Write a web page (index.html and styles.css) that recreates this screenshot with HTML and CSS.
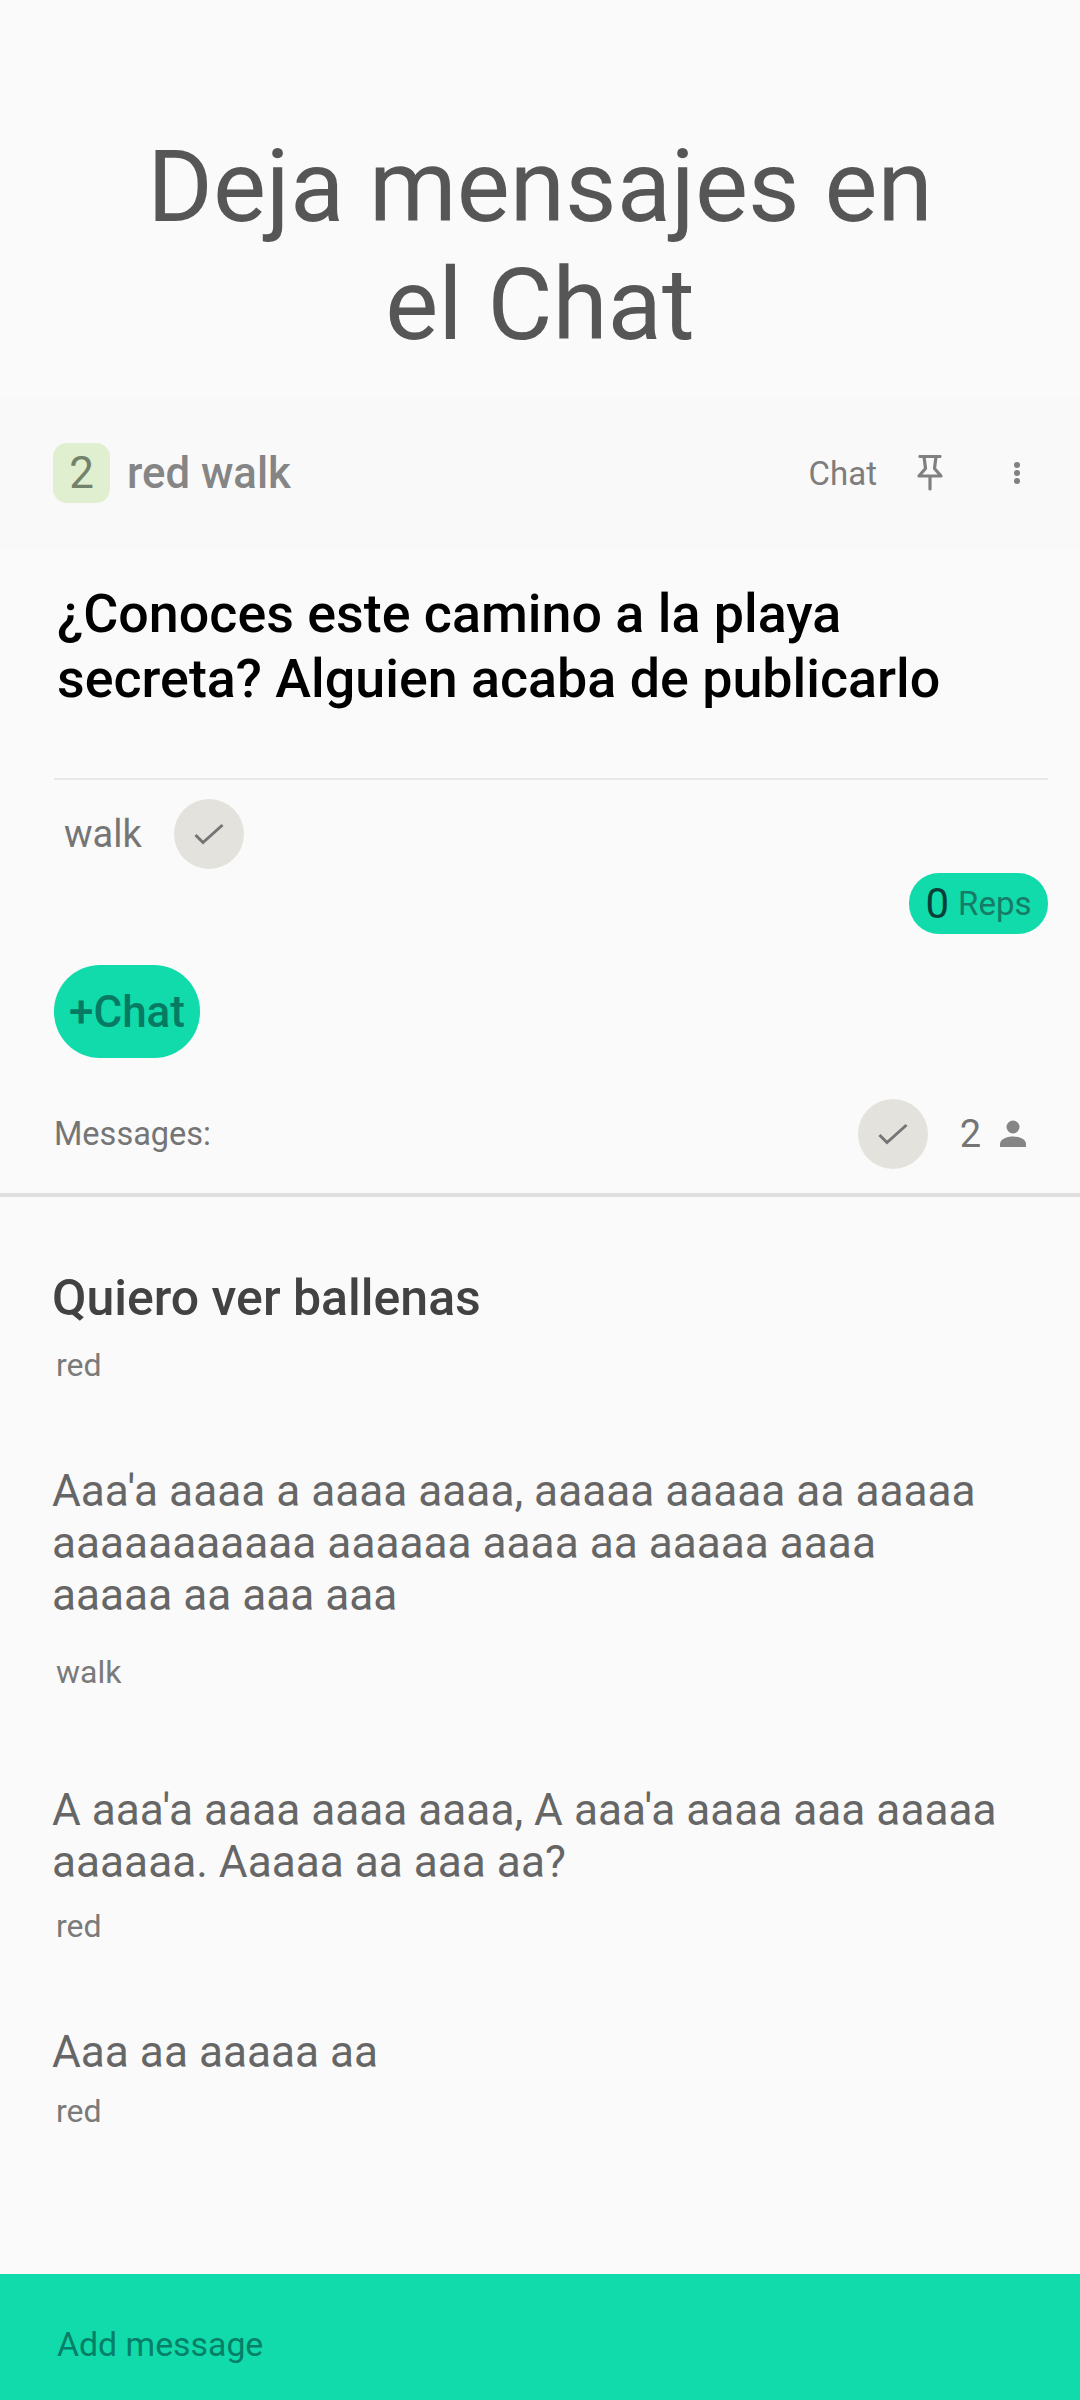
FILE: index.html
```html
<!DOCTYPE html>
<html lang="en">
<head>
    <meta charset="UTF-8">
    <meta name="viewport" content="width=device-width, initial-scale=1.0">
    <title>Deja mensajes en el Chat</title>
    <link rel="stylesheet" href="styles.css">
</head>
<body>
    <div id="main">
        <h1 class="title">Deja mensajes en<br>el Chat</h1>

        <div class="bar">
            <span class="badge">2</span>
            <span class="bar-name">red walk</span>
            <span class="bar-chat">Chat</span>
            <svg class="pin" viewBox="0 0 26 36" width="26" height="36">
                <path d="M3 1.500h20M7 1.500l1.500 12L2 21h22l-6.500-7.500 1.500-12M13 21v13" fill="none" stroke="#808080" stroke-width="3.200" stroke-linecap="round" stroke-linejoin="round"/>
            </svg>
            <span class="dots"><i></i><i></i><i></i></span>
        </div>

        <h2 class="question">¿Conoces este camino a la playa<br>secreta? Alguien acaba de publicarlo</h2>

        <div class="divider"></div>

        <div class="author-row">
            <span class="author">walk</span>
            <span class="check">
                <svg viewBox="0 0 30 22" width="30" height="22"><path d="M1.500 12l7.500 7.500L28.500 2" fill="none" stroke="#757575" stroke-width="3"/></svg>
            </span>
        </div>

        <div class="reps-row">
            <span class="reps"><b>0</b> Reps</span>
        </div>

        <button class="add-chat">+Chat</button>

        <div class="messages-head">
            <span class="messages-label">Messages:</span>
            <span class="check">
                <svg viewBox="0 0 30 22" width="30" height="22"><path d="M1.500 12l7.500 7.500L28.500 2" fill="none" stroke="#757575" stroke-width="3"/></svg>
            </span>
            <span class="people">2</span>
            <svg class="person" viewBox="0 0 28 28" width="28" height="28">
                <circle cx="14" cy="7" r="6.500" fill="#858585"/>
                <path d="M1 27v-3c0-5 7-7.500 13-7.500s13 2.500 13 7.500v3z" fill="#858585"/>
            </svg>
        </div>

        <div class="list">
            <div class="msg msg-first">
                <p class="msg-head">Quiero ver ballenas</p>
                <span class="msg-by">red</span>
            </div>
            <div class="msg msg-long">
                <p>Aaa'a aaaa a aaaa aaaa, aaaaa aaaaa aa aaaaa<br>aaaaaaaaaaa aaaaaa aaaa aa aaaaa aaaa<br>aaaaa aa aaa aaa</p>
                <span class="msg-by">walk</span>
            </div>
            <div class="msg msg-mid">
                <p>A aaa'a aaaa aaaa aaaa, A aaa'a aaaa aaa aaaaa<br>aaaaaa. Aaaaa aa aaa aa?</p>
                <span class="msg-by">red</span>
            </div>
            <div class="msg msg-short">
                <p>Aaa aa aaaaa aa</p>
                <span class="msg-by">red</span>
            </div>
        </div>

        <div class="footer">Add message</div>
    </div>
</body>
</html>
```

FILE: styles.css
```css
body {
    font-family: Roboto, sans-serif;
    background-color: #fafafa;
    margin: 0;
    padding: 0;
}

#main {
    display: flex;
    flex-direction: column;
    height: 2400px;
    overflow: hidden;
}

.title {
    margin: 0;
    padding-top: 128px;
    height: 397px;
    box-sizing: border-box;
    text-align: center;
    font-size: 100px;
    line-height: 118px;
    font-weight: 400;
    color: #565656;
}

.bar {
    display: flex;
    align-items: center;
    height: 152px;
    padding: 0 54px 0 53px;
    background-color: #f9f9f9;
}

.badge {
    width: 57px;
    height: 60px;
    border-radius: 14px;
    background-color: #e0efcf;
    color: #73836b;
    font-size: 44px;
    line-height: 60px;
    text-align: center;
}

.bar-name {
    margin-left: 17px;
    font-size: 43.700px;
    font-weight: 500;
    color: #858585;
    flex: 1;
}

.bar-chat {
    font-size: 33px;
    color: #7d7d7d;
}

.pin {
    margin-left: 40px;
}

.dots {
    display: flex;
    flex-direction: column;
    gap: 2px;
    margin-left: 71px;
    margin-right: 6px;
}

.dots i {
    display: block;
    width: 6px;
    height: 6px;
    border-radius: 50%;
    background-color: #808080;
}

.question {
    margin: 0;
    padding: 32px 57px 0;
    font-size: 53.800px;
    line-height: 65px;
    font-weight: 500;
    color: #000;
}

.divider {
    margin: 67px 32px 0 54px;
    height: 2px;
    background-color: #e8e8e8;
}

.author-row {
    display: flex;
    align-items: center;
    margin-top: 19px;
    padding-left: 64px;
}

.author {
    width: 110px;
    font-size: 38px;
    color: #757575;
}

.check {
    display: flex;
    align-items: center;
    justify-content: center;
    width: 70px;
    height: 70px;
    border-radius: 50%;
    background-color: #e4e2dd;
}

.reps-row {
    display: flex;
    justify-content: flex-end;
    margin-top: 4px;
    padding-right: 32px;
}

.reps {
    display: flex;
    align-items: center;
    justify-content: center;
    gap: 9px;
    width: 139px;
    height: 61px;
    border-radius: 30px;
    background-color: #11dbaa;
    color: #167b67;
    font-size: 33px;
}

.reps b {
    font-size: 42px;
    font-weight: 400;
    color: #083f38;
}

.add-chat {
    align-self: flex-start;
    width: 146px;
    height: 93px;
    margin: 31px 0 0 54px;
    padding: 0;
    border: none;
    border-radius: 46px;
    background-color: #11dbaa;
    color: #077a64;
    font-family: inherit;
    font-size: 44px;
    font-weight: 500;
}

.messages-head {
    display: flex;
    align-items: center;
    margin-top: 41px;
    padding: 0 53px 24px 54px;
    border-bottom: 4px solid #e0e0e0;
}

.messages-label {
    flex: 1;
    font-size: 32.500px;
    color: #757575;
}

.people {
    margin-left: 32px;
    font-size: 38px;
    color: #757575;
}

.person {
    margin-left: 18px;
}

.list {
    padding: 0 52px;
    color: #666;
}

.msg p {
    margin: 0;
    font-size: 44.200px;
    line-height: 52px;
}

.msg .msg-head {
    font-size: 50px;
    line-height: 60px;
    font-weight: 500;
    color: #424242;
}

.msg-by {
    display: block;
    margin-left: 4px;
    font-size: 32px;
    line-height: 36px;
    color: #7a7a7a;
}

.msg-first {
    margin-top: 71px;
}

.msg-first .msg-by {
    margin-top: 19px;
}

.msg-long {
    margin-top: 82px;
}

.msg-long .msg-by {
    margin-top: 33px;
}

.msg-mid {
    margin-top: 94px;
}

.msg-mid .msg-by {
    margin-top: 20px;
}

.msg-short {
    margin-top: 82px;
}

.msg-short .msg-by {
    margin-top: 15px;
}

.footer {
    margin-top: auto;
    height: 126px;
    box-sizing: border-box;
    padding: 51px 57px 0;
    background-color: #11dbaa;
    color: #067f68;
    font-size: 33.800px;
    line-height: 40px;
}
```
